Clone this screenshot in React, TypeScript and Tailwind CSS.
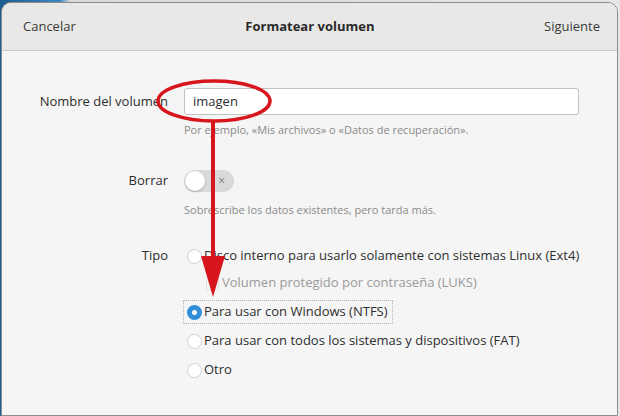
import React from "react";

// Formatear volumen — GNOME Disks style dialog with a red annotation overlay

function Radio({ checked }: { checked?: boolean }) {
  if (checked) {
    return (
      <span className="flex h-[15px] w-[15px] shrink-0 items-center justify-center rounded-full bg-[#2f8fdb]">
        <span className="h-[5px] w-[5px] rounded-full bg-white" />
      </span>
    );
  }
  return <span className="h-[15px] w-[15px] shrink-0 rounded-full border border-[#cfcfcf] bg-white" />;
}

export default function App() {
  return (
    <div
      className="relative h-[416px] w-[620px] overflow-hidden bg-[linear-gradient(90deg,#1f5c8f_0px,#3b86c2_60px,#d8d8d8_70px,#e6e6e6_100%)] pt-[2px] pl-[1px] pr-[2px]"
      style={{ fontFamily: '"Open Sans", "Noto Sans", sans-serif' }}
    >
      <div className="flex h-full flex-col overflow-hidden rounded-t-[10px] border border-[#8c8c8c] bg-[#f5f5f5] text-[13px] text-[#2e2e2e]">
        {/* header bar */}
        <div className="flex h-[48px] shrink-0 items-center justify-between border-b border-[#c9c9c9] bg-[#e8e8e7] pl-[21px] pr-[17px]">
          <span className="text-[#3a3a3a]">Cancelar</span>
          <span className="font-bold text-[#2a2a2a]">Formatear volumen</span>
          <span className="text-[#3a3a3a]">Siguiente</span>
        </div>

        {/* form */}
        <div className="grid grid-cols-[166px_1fr] gap-x-[16px] pt-[37px] pr-[38px] whitespace-nowrap">
          <div className="flex h-[27px] items-center justify-end">Nombre del volumen</div>
          <div>
            <div className="flex h-[27px] items-center rounded-[3px] border border-[#c2c2c2] bg-white px-[8px]">
              imagen
            </div>
            <p className="mt-[7px] text-[11px] text-[#8a8a8a]">
              Por ejemplo, «Mis archivos» o «Datos de recuperación».
            </p>
          </div>

          <div className="mt-[31px] flex h-[22px] items-center justify-end">Borrar</div>
          <div className="mt-[31px]">
            <div className="relative flex h-[22px] w-[50px] items-center rounded-full bg-[#d9d9d9]">
              <span className="absolute left-[1px] top-[1px] h-[20px] w-[20px] rounded-full bg-white shadow-[0_1px_2px_rgba(0,0,0,0.25)]" />
              <span className="absolute right-[9px] top-[2px] text-[12px] text-[#7a7a7a]">×</span>
            </div>
            <p className="mt-[10px] text-[11px] text-[#8a8a8a]">
              Sobrescribe los datos existentes, pero tarda más.
            </p>
          </div>

          <div className="mt-[28px] flex h-[20px] items-center justify-end">Tipo</div>
          <div className="mt-[28px] flex flex-col">
            <div className="flex h-[20px] items-center gap-[2px] pl-[3px]">
              <Radio />
              <span>Disco interno para usarlo solamente con sistemas Linux (Ext4)</span>
            </div>
            <div className="mt-[9px] ml-[22px] flex h-[16px] items-center gap-[3px] text-[#9a9a9a]">
              <span className="h-[13px] w-[13px] rounded-[2px] border border-[#e0e0e0] bg-[#f7f7f7]" />
              <span>Volumen protegido por contraseña (LUKS)</span>
            </div>
            <div className="mt-[9px] flex h-[24px] w-fit items-center gap-[2px] border border-dotted border-[#b5b5b5] pl-[3px] pr-[4px] -ml-[1px]">
              <Radio checked />
              <span>Para usar con Windows (NTFS)</span>
            </div>
            <div className="mt-[7px] flex h-[20px] items-center gap-[2px] pl-[3px]">
              <Radio />
              <span>Para usar con todos los sistemas y dispositivos (FAT)</span>
            </div>
            <div className="mt-[9px] flex h-[20px] items-center gap-[2px] pl-[3px]">
              <Radio />
              <span>Otro</span>
            </div>
          </div>
        </div>
      </div>

      {/* red annotation */}
      <svg className="pointer-events-none absolute left-0 top-0" width="620" height="416" viewBox="0 0 620 416">
        <ellipse cx="214" cy="101" rx="56" ry="20" fill="none" stroke="#d7151c" strokeWidth="3.5" />
        <line x1="213" y1="121" x2="213" y2="262" stroke="#d7151c" strokeWidth="4" />
        <polygon points="201,256 225,256 213,297" fill="#d7151c" />
      </svg>
    </div>
  );
}
